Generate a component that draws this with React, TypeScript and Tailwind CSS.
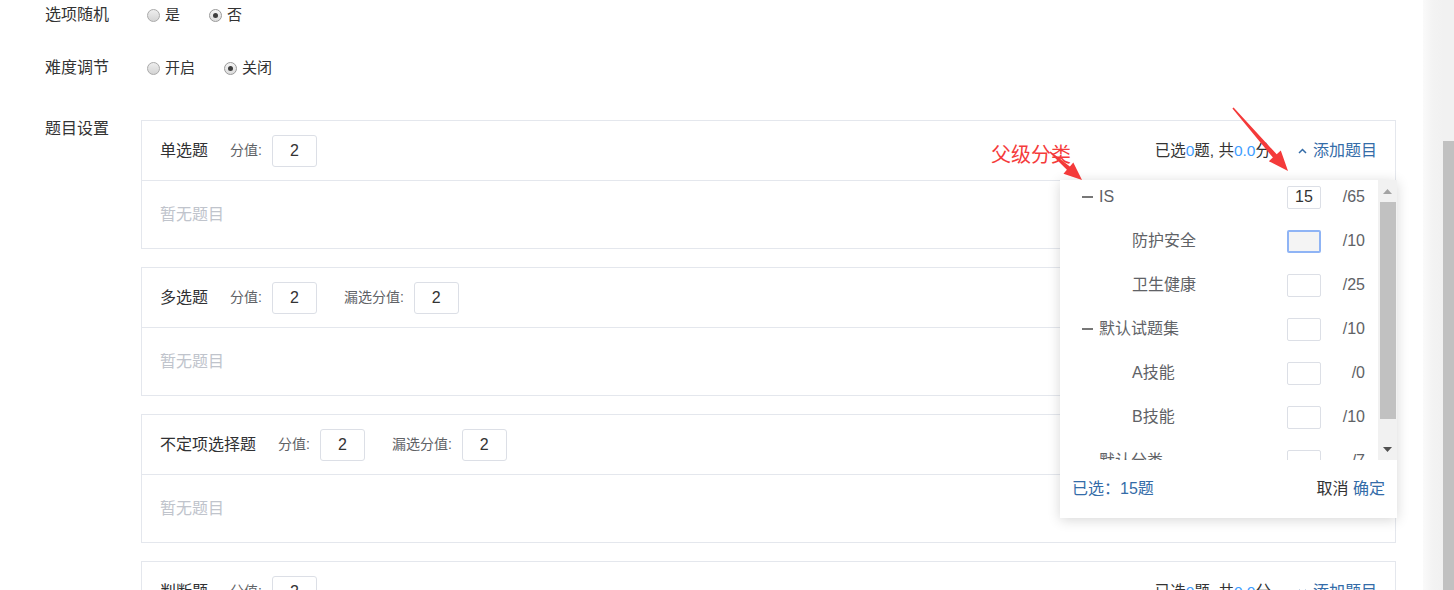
import React from 'react';

const BLUE = 'text-[#409eff]';

const Radio: React.FC<{ checked?: boolean; label: string }> = ({ checked, label }) => (
    <label className="flex items-center mr-[23px]">
        <span
            className={`ml-[6px] mr-[5px] w-[13px] h-[13px] rounded-full border flex items-center justify-center ${
                checked ? 'border-[#9a9a9a] bg-gradient-to-b from-[#f4f4f4] to-[#dcdcdc]' : 'border-[#aaaaaa] bg-gradient-to-b from-[#eeeeee] to-[#d4d4d4]'
            }`}
        >
            {checked && <span className="w-[5px] h-[5px] rounded-full bg-[#3d3d3d]"></span>}
        </span>
        <span className="text-[15px] text-[#333]">{label}</span>
    </label>
);

const ScoreBox: React.FC<{ value: string; className?: string }> = ({ value, className = '' }) => (
    <input
        readOnly
        value={value}
        className={`w-[45px] h-[32px] border border-[#dcdfe6] rounded-[3px] text-center text-[16px] text-[#333] outline-none ${className}`}
    />
);

const Chevron: React.FC<{ up?: boolean }> = ({ up }) => (
    <svg width="9" height="6" viewBox="0 0 9 6" className="shrink-0">
        <path
            d={up ? 'M1 5 L4.5 1.5 L8 5' : 'M1 1 L4.5 4.5 L8 1'}
            fill="none"
            stroke="#346ca8"
            strokeWidth="1.5"
        />
    </svg>
);

const categories = [
    { name: 'IS', parent: true, value: '15', total: '/65' },
    { name: '防护安全', parent: false, value: '', total: '/10', focused: true },
    { name: '卫生健康', parent: false, value: '', total: '/25' },
    { name: '默认试题集', parent: true, value: '', total: '/10' },
    { name: 'A技能', parent: false, value: '', total: '/0' },
    { name: 'B技能', parent: false, value: '', total: '/10' },
    { name: '默认分类', parent: true, value: '', total: '/7' },
];

const CategoryPopup: React.FC = () => (
    <div className="absolute top-[59px] right-[-2px] w-[337px] z-20 bg-white shadow-[0_2px_12px_rgba(0,0,0,0.16)]">
        <div className="flex h-[280px]">
            <div className="flex-1 overflow-hidden">
                <div className="-mt-[5px]">
                    {categories.map((c) => (
                        <div key={c.name} className="h-[44px] flex items-center pr-[13px] text-[16px] text-[#606266]">
                            {c.parent ? (
                                <div className="flex-1 flex items-center pl-[22px]">
                                    <span className="w-[11px] h-[1.5px] bg-[#777] mr-[6px]"></span>
                                    <span>{c.name}</span>
                                </div>
                            ) : (
                                <div className="flex-1 pl-[72px]">{c.name}</div>
                            )}
                            <input
                                readOnly
                                value={c.value}
                                className={`w-[34px] h-[23px] text-center text-[16px] text-[#333] outline-none rounded-[2px] ${
                                    c.focused
                                        ? 'border-2 border-[#8fb4f5] bg-[#f4f4f4]'
                                        : 'border border-[#dcdfe6] bg-white'
                                }`}
                            />
                            <span className="w-[44px] text-right">{c.total}</span>
                        </div>
                    ))}
                </div>
            </div>
            {/* list scrollbar */}
            <div className="w-[19px] bg-[#f1f1f1] flex flex-col">
                <div className="h-[22px] flex items-center justify-center">
                    <svg width="9" height="5" viewBox="0 0 9 5">
                        <path d="M0 5 L4.5 0 L9 5 Z" fill="#a3a3a3" />
                    </svg>
                </div>
                <div className="h-[217px] ml-[2px] mr-[1px] bg-[#c1c1c1]"></div>
                <div className="flex-1"></div>
                <div className="h-[22px] flex items-center justify-center">
                    <svg width="9" height="5" viewBox="0 0 9 5">
                        <path d="M0 0 L9 0 L4.5 5 Z" fill="#505050" />
                    </svg>
                </div>
            </div>
        </div>
        <div className="h-[58px] flex items-center justify-between px-[12px] text-[16px] bg-white rounded-b-[3px]">
            <span className="text-[#346ca8]">已选：15题</span>
            <span>
                <span className="text-[#333]">取消</span> <span className="text-[#346ca8]">确定</span>
            </span>
        </div>
    </div>
);

type Field = { label: string; value: string };

const QuestionCard: React.FC<{ title: string; fields: Field[]; open?: boolean }> = ({ title, fields, open }) => (
    <div className="relative border border-[#e4e7ed] mb-[18px]">
        <div className="h-[59px] flex items-center px-[18px]">
            <span className="text-[16px] text-[#303133]">{title}</span>
            {fields.map((f, i) => (
                <div key={f.label} className={`flex items-center ${i === 0 ? 'ml-[22px]' : 'ml-[27px]'}`}>
                    <span className="text-[14px] text-[#606266]">{f.label}</span>
                    <ScoreBox value={f.value} className="ml-[10px]" />
                </div>
            ))}
            <div className="ml-auto flex items-center text-[16px]">
                <span className="text-[#333] text-[15.5px]">
                    已选<span className={BLUE}>0</span>题, 共<span className={BLUE}>0.0</span>分
                </span>
                <span className="ml-[27px] flex items-center text-[#346ca8]">
                    <Chevron up={open} />
                    <span className="ml-[6px]">添加题目</span>
                </span>
            </div>
        </div>
        <div className="border-t border-[#e4e7ed] h-[68px] flex items-center px-[18px] text-[16px] text-[#c0c4cc]">
            暂无题目
        </div>
        {open && <CategoryPopup />}
    </div>
);

const App: React.FC = () => {
    return (
        <div className="relative h-screen overflow-hidden flex bg-white font-['Liberation_Sans','Noto_Sans_CJK_SC',sans-serif]">
            <div className="flex-1 pl-[45px] pr-[27px]">
                {/* 选项随机 */}
                <div className="h-[30px] flex items-center">
                    <div className="w-[96px] text-[16px] text-[#333]">选项随机</div>
                    <Radio label="是" />
                    <Radio label="否" checked />
                </div>

                {/* 难度调节 */}
                <div className="mt-[23px] h-[30px] flex items-center">
                    <div className="w-[96px] text-[16px] text-[#333]">难度调节</div>
                    <Radio label="开启" />
                    <Radio label="关闭" checked />
                </div>

                {/* 题目设置 */}
                <div className="mt-[37px] flex items-start">
                    <div className="w-[96px] text-[16px] leading-[17px] text-[#333]">题目设置</div>
                    <div className="flex-1">
                        <QuestionCard title="单选题" fields={[{ label: '分值:', value: '2' }]} open />
                        <QuestionCard
                            title="多选题"
                            fields={[
                                { label: '分值:', value: '2' },
                                { label: '漏选分值:', value: '2' },
                            ]}
                        />
                        <QuestionCard
                            title="不定项选择题"
                            fields={[
                                { label: '分值:', value: '2' },
                                { label: '漏选分值:', value: '2' },
                            ]}
                        />
                        <QuestionCard title="判断题" fields={[{ label: '分值:', value: '2' }]} />
                    </div>
                </div>
            </div>

            {/* page scrollbar area */}
            <div className="w-[20px] bg-gradient-to-r from-[#fafafa] via-[#f3f3f3] to-[#f1f1f1]"></div>
            <div className="w-[11px] bg-[#f1f1f1] flex flex-col">
                <div className="mt-[141px] flex-1 bg-[#c1c1c1]"></div>
            </div>

            {/* red annotations */}
            <div className="absolute left-[991px] top-[142px] z-30 text-[20px] leading-[26px] text-[#f53b3b]">父级分类</div>
            <svg className="absolute inset-0 z-30 pointer-events-none" width="1454" height="590">
                <polygon
                    points="1050.5,151.4 1069.9,166.4 1073.3,162.5 1082,180 1063.5,173.7 1066.9,169.8 1049.5,152.6"
                    fill="#f43a3a"
                />
                <polygon
                    points="1233.6,107.5 1276.7,154.3 1280.8,150.6 1288,171 1268.8,161.2 1272.9,157.5 1232.4,108.5"
                    fill="#f43a3a"
                />
            </svg>
        </div>
    );
};

export default App;
